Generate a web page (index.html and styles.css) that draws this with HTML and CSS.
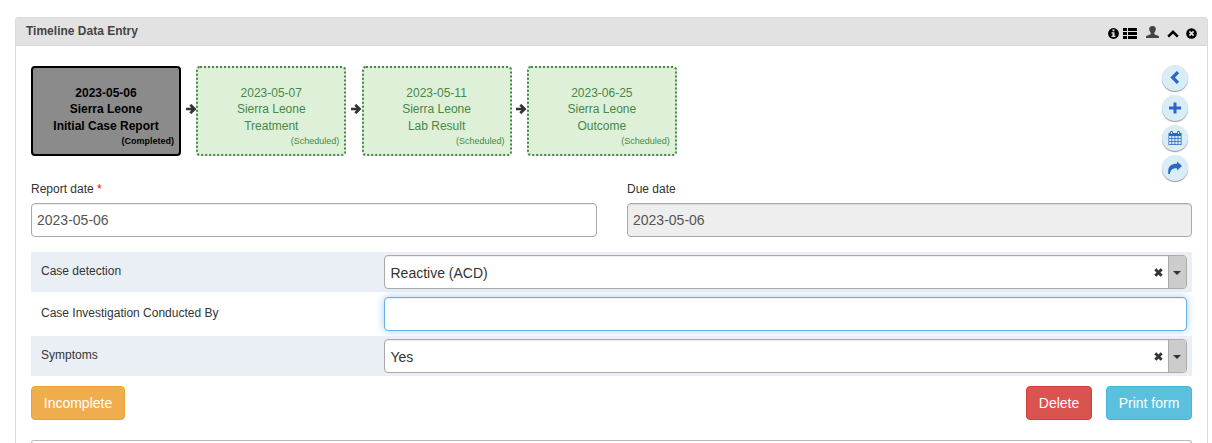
FILE: index.html
```html
<!DOCTYPE html>
<html lang="en">
<head>
<meta charset="utf-8">
<title>Timeline Data Entry</title>
<link rel="stylesheet" href="styles.css">
</head>
<body>
<main class="panel">
  <header class="panel-header">
    <h1 class="panel-title">Timeline Data Entry</h1>
    <div class="panel-tools">
      <svg class="tool-info" width="11" height="11" viewBox="0 0 11 11"><circle cx="5.500" cy="5.500" r="5.400"/><path fill="#e2e2e2" d="M4.500 1.600h2v1.600h-2zM3.500 4.200h3v3.500h1v1.200h-4V7.700h1V5.400h-1z"/></svg>
      <svg class="tool-list" width="14" height="11" viewBox="0 0 14 11"><path d="M0 0h4v3H0zM5 0h9v3H5zM0 4h4v3H0zM5 4h9v3H5zM0 8h4v3H0zM5 8h9v3H5z"/></svg>
      <svg class="tool-user" width="13" height="12" viewBox="0 0 13 12"><path d="M6.500 0C9 0 10 1.500 9.800 3.600 9.600 5 9 6 8.300 6.800v1c0 .7 1 1 2 1.300C12 9.700 13 10 13 11.200V12H0v-.8C0 10 1 9.700 2.700 9.100c1-.3 2-.6 2-1.300v-1C4 6 3.400 5 3.200 3.600 3 1.500 4 0 6.500 0z"/></svg>
      <svg class="tool-up" width="12" height="8" viewBox="0 0 12 8"><path fill="none" stroke="#000" stroke-width="2.600" d="M1.200 6.600L6 1.900l4.800 4.700"/></svg>
      <svg class="tool-close" width="11" height="11" viewBox="0 0 11 11"><circle cx="5.500" cy="5.500" r="5.300"/><path stroke="#e2e2e2" stroke-width="1.700" d="M3.400 3.400l4.200 4.200M7.600 3.400L3.400 7.600"/></svg>
    </div>
  </header>
  <div class="panel-body">
    <section class="timeline">
      <div class="stages">
        <div class="stage completed"><p>2023-05-06</p><p>Sierra Leone</p><p>Initial Case Report</p><p class="status">(Completed)</p></div>
        <svg class="arrow" width="10" height="10" viewBox="0 0 10 10"><path d="M0 5h8.500M4.300 .8L8.500 5 4.300 9.200"/></svg>
        <div class="stage"><p>2023-05-07</p><p>Sierra Leone</p><p>Treatment</p><p class="status">(Scheduled)</p></div>
        <svg class="arrow" width="10" height="10" viewBox="0 0 10 10"><path d="M0 5h8.500M4.300 .8L8.500 5 4.300 9.200"/></svg>
        <div class="stage"><p>2023-05-11</p><p>Sierra Leone</p><p>Lab Result</p><p class="status">(Scheduled)</p></div>
        <svg class="arrow" width="10" height="10" viewBox="0 0 10 10"><path d="M0 5h8.500M4.300 .8L8.500 5 4.300 9.200"/></svg>
        <div class="stage"><p>2023-06-25</p><p>Sierra Leone</p><p>Outcome</p><p class="status">(Scheduled)</p></div>
      </div>
      <div class="actions">
        <span class="round"><svg width="14" height="14" viewBox="0 0 14 14"><path fill="none" stroke="#2c66c9" stroke-width="3.200" d="M10 1.100L4.600 6.500l5.400 5.400"/></svg></span>
        <span class="round"><svg width="14" height="14" viewBox="0 0 14 14"><path d="M5.500 1.500h3v4H13v3H8.500v4h-3v-4H1v-3h4.500z"/></svg></span>
        <span class="round"><svg width="14" height="14" viewBox="0 0 14 14"><path fill-rule="evenodd" d="M2 1Q2 0 3.500 0T5 1V2h4V1Q9 0 10.500 0T12 1V2h1.500v12H.5V2H2zM3 1v2h1v-2zM10 1v2h1v-2zM1.200 5v2.300h2.200V5zM4.200 5v2.300h2.300V5zM7.300 5v2.300h2.300V5zM10.400 5v2.300h2.300V5zM1.200 8v2.300h2.200V8zM4.200 8v2.300h2.300V8zM7.300 8v2.300h2.300V8zM10.400 8v2.300h2.300V8zM1.200 11v2.200h2.200v-2.200zM4.200 11v2.200h2.300v-2.200zM7.300 11v2.200h2.300v-2.200zM10.400 11v2.200h2.300v-2.200z"/></svg></span>
        <span class="round"><svg width="14" height="14" viewBox="0 0 14 14"><path d="M9 .5l5 4.500L9 9.500V7.300C5 7.100 2.500 8.300 1.900 13H.3C-.5 6 2.500 2.800 9 2.800z"/></svg></span>
      </div>
    </section>
    <section class="dates">
      <label class="date-field">
        <span>Report date <span class="required">*</span></span>
        <input class="control date-input" type="text" value="2023-05-06">
      </label>
      <label class="date-field">
        <span>Due date</span>
        <input class="control date-input" type="text" value="2023-05-06" disabled>
      </label>
    </section>
    <section class="rows">
      <div class="row shaded">
        <span class="row-label">Case detection</span>
        <div class="control select"><span class="value">Reactive (ACD)</span><svg class="clear" width="9" height="9" viewBox="0 0 9 9"><path d="M1.300 1.300l6.400 6.400M7.700 1.300L1.300 7.700"/></svg><span class="caret"></span></div>
      </div>
      <div class="row">
        <span class="row-label">Case Investigation Conducted By</span>
        <input class="control focused" type="text" aria-label="Case Investigation Conducted By">
      </div>
      <div class="row shaded">
        <span class="row-label">Symptoms</span>
        <div class="control select"><span class="value">Yes</span><svg class="clear" width="9" height="9" viewBox="0 0 9 9"><path d="M1.300 1.300l6.400 6.400M7.700 1.300L1.300 7.700"/></svg><span class="caret"></span></div>
      </div>
    </section>
    <footer class="buttons">
      <button class="btn warning">Incomplete</button>
      <button class="btn danger">Delete</button>
      <button class="btn info">Print form</button>
    </footer>
    <div class="note-box"></div>
  </div>
</main>
</body>
</html>
```
FILE: styles.css
```css
* { box-sizing: border-box; }
html, body { height: 100%; }
body {
  margin: 0;
  padding: 17px 4px 0 15px;
  overflow: hidden;
  background: #fff;
  color: #333;
  font: 12px/17px "Liberation Sans", Arial, sans-serif;
}
p, h1 { margin: 0; }
svg { display: block; flex: none; }
.panel {
  height: 100%;
  border: 1px solid #d9d9d9;
  border-bottom: 0;
  border-radius: 4px 4px 0 0;
}
.panel-header {
  display: flex;
  justify-content: space-between;
  height: 28px;
  padding: 4px 10px 0;
  border-bottom: 1px solid #d9d9d9;
  border-radius: 3px 3px 0 0;
  background: #e2e2e2;
}
.panel-title { color: #444; font-size: 12px; line-height: 18px; }
.panel-tools { display: flex; align-items: flex-start; }
.tool-info { margin: 6px 4px 0 0; }
.tool-list { margin: 6px 9px 0 0; }
.tool-user { margin: 4px 8px 0 0; fill: #444; }
.tool-up { margin: 8px 7px 0 0; }
.tool-close { margin-top: 6px; }
.panel-body { padding: 20px 15px 0; }
.timeline { display: flex; justify-content: space-between; height: 115px; }
.stages { display: flex; }
.stage {
  width: 150px;
  height: 90px;
  padding: 16.6px 5px 0;
  border: 2px dotted #468847;
  border-radius: 4px;
  background: #dff0d8;
  color: #468847;
  text-align: center;
  line-height: 16.7px;
}
.stage .status { font-size: 9px; line-height: 13px; text-align: right; }
.completed {
  border: 2px solid #000;
  background: #8b8b8b;
  color: #000;
  font-weight: bold;
}
.arrow {
  margin: 38px .4px 0 4.9px;
  fill: none;
  stroke: #333;
  stroke-width: 2.7;
}
.actions { display: flex; flex-direction: column; gap: 4px; padding-right: 4px; margin-top: -1px; }
.round {
  display: grid;
  place-items: center;
  flex: none;
  width: 26px;
  height: 26px;
  border-radius: 50%;
  background: #d9edf7;
  box-shadow: 0 1px 1px #999;
  fill: #2c66c9;
}
.dates { display: grid; grid-template-columns: 566px 565px; gap: 30px; }
.date-field { display: block; }
.date-field > span { display: block; height: 22px; }
.required { color: #f00; }
.control {
  display: block;
  width: 100%;
  height: 34px;
  margin: 0;
  padding: 0 5px;
  border: 1px solid #aaa;
  border-radius: 4px;
  background: #fff;
  box-shadow: inset 0 1px 1px rgba(0, 0, 0, .075);
  color: #333;
  font: 14px "Liberation Sans", Arial, sans-serif;
}
.date-input { color: #555; }
.date-input:disabled { background: #eee; }
.rows { display: flex; flex-direction: column; gap: 2px; margin-top: 15px; }
.row {
  display: grid;
  grid-template-columns: 343px 803px;
  height: 40px;
  padding: 3px 5px 3px 10px;
}
.shaded { background: #eaeff6; }
.row-label { padding-top: 8px; }
.select { display: flex; align-items: center; padding-right: 0; overflow: hidden; }
.value { flex: 1; padding: 1px 0 0 .5px; }
.clear { margin: 1px 5px 0 0; stroke: #333; stroke-width: 2.8; }
.caret {
  display: grid;
  place-items: center;
  width: 18px;
  height: 32px;
  padding: 1px 2px 0 0;
  border-left: 1px solid #aaa;
  background: #ccc;
}
.caret::after {
  content: "";
  border: 4px solid transparent;
  border-top-color: #333;
  border-bottom: 0;
}
.focused {
  border-color: #66afe9;
  box-shadow: inset 0 1px 1px rgba(0, 0, 0, .075), 0 0 8px rgba(102, 175, 233, .6);
}
.buttons { display: flex; margin-top: 10px; }
.btn {
  height: 34px;
  padding: 0;
  border: 1px solid;
  border-radius: 4px;
  color: #fff;
  font: 14px "Liberation Sans", Arial, sans-serif;
  white-space: nowrap;
}
.warning { width: 94px; margin-right: auto; border-color: #eea236; background: #f0ad4e; }
.danger { width: 66px; margin-right: 14px; border-color: #d43f3a; background: #d9534f; }
.info { width: 86px; border-color: #46b8da; background: #5bc0de; }
.note-box {
  height: 3px;
  margin-top: 20px;
  border: 1px solid #bbb;
  border-bottom: 0;
  border-radius: 4px 4px 0 0;
}
```
